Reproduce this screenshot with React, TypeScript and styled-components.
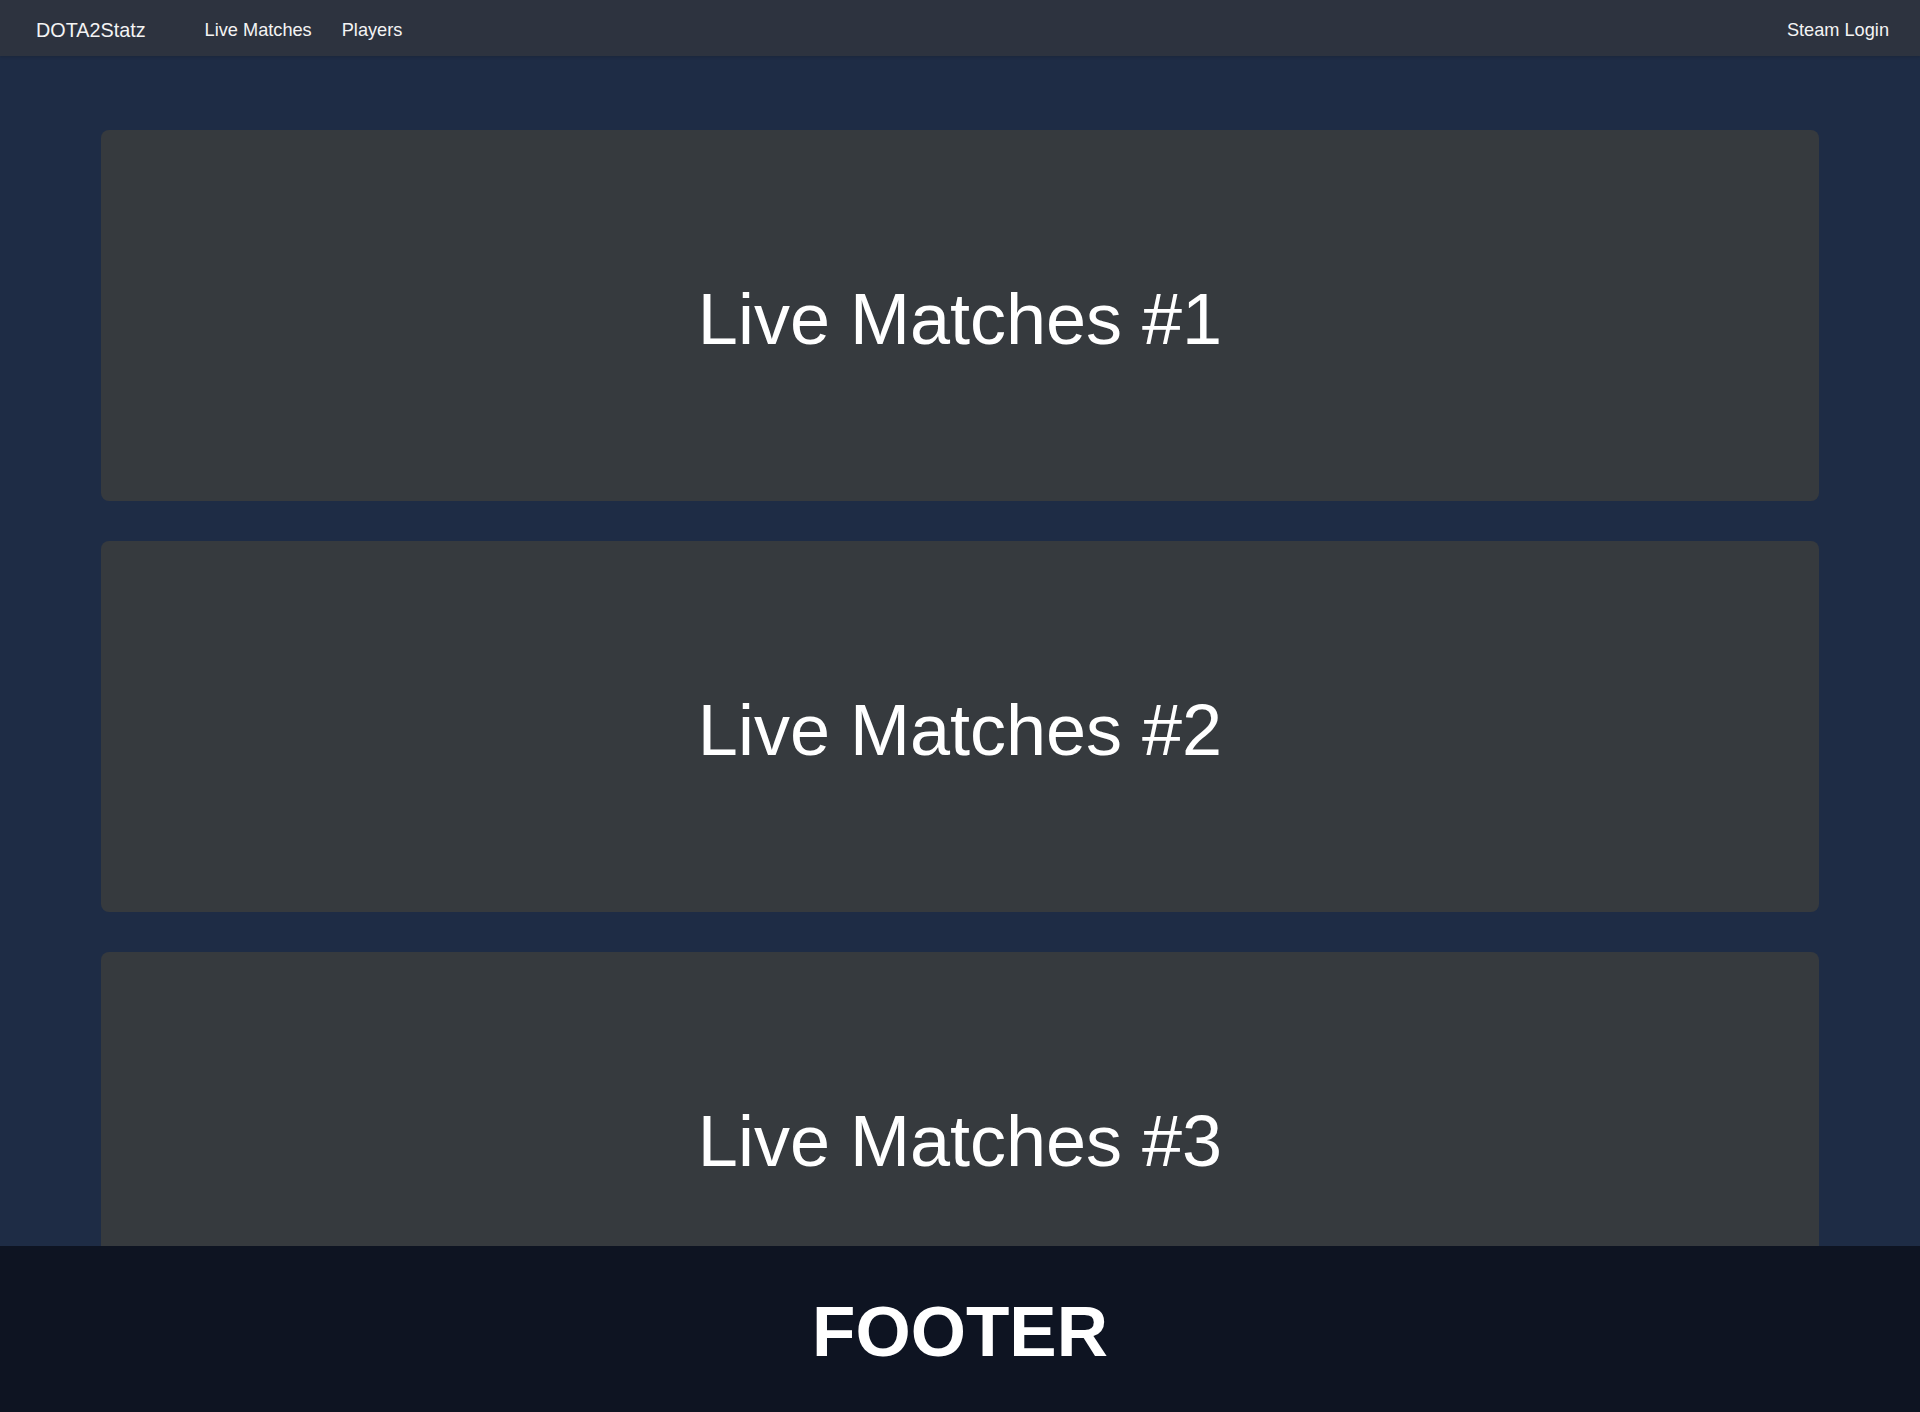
import React from "react";
import styled, { createGlobalStyle } from "styled-components";

const GlobalStyle = createGlobalStyle`
  html, body {
    margin: 0;
    padding: 0;
    background: #1e2c45;
    font-family: "Liberation Sans", Arial, Helvetica, sans-serif;
    color: #fff;
  }
  * {
    box-sizing: border-box;
  }
`;

const matches = [1, 2, 3];

const App: React.FC = () => {
  return (
    <>
      <GlobalStyle />
      <Page>
        <NavBar>
          <Brand href="#">DOTA2Statz</Brand>
          <NavLinks>
            <NavLink href="#">Live Matches</NavLink>
            <NavLink href="#">Players</NavLink>
          </NavLinks>
          <LoginLink href="#">Steam Login</LoginLink>
        </NavBar>
        <Main>
          {matches.map((n) => (
            <MatchCard key={n}>
              <CardTitle>Live Matches #{n}</CardTitle>
            </MatchCard>
          ))}
        </Main>
        <Footer>
          <FooterTitle>FOOTER</FooterTitle>
        </Footer>
      </Page>
    </>
  );
};

const Page = styled.div`
  min-height: 100vh;
  background: #1e2c45;
`;

const NavBar = styled.nav`
  height: 56px;
  display: flex;
  align-items: center;
  padding: 5px 31px 0 36px;
  background: #2d333f;
  box-shadow: 0 1px 3px rgba(0, 0, 0, 0.15);
`;

const Brand = styled.a`
  font-size: 19.8px;
  color: #f4f4f4;
  text-decoration: none;
  margin-right: 59px;
`;

const NavLinks = styled.div`
  display: flex;
  align-items: center;
  gap: 30px;
  flex: 1;
`;

const NavLink = styled.a`
  font-size: 18.2px;
  color: #f4f4f4;
  text-decoration: none;
`;

const LoginLink = styled(NavLink)``;

const Main = styled.main`
  display: flex;
  flex-direction: column;
  gap: 40px;
  padding: 74px 101px 206px;
`;

const MatchCard = styled.section`
  height: 371px;
  display: flex;
  align-items: center;
  justify-content: center;
  padding-top: 6px;
  background: #363a3e;
  border-radius: 8px;
`;

const CardTitle = styled.h2`
  margin: 0;
  font-size: 72px;
  font-weight: 400;
  color: #fff;
`;

const Footer = styled.footer`
  position: fixed;
  left: 0;
  right: 0;
  bottom: 0;
  height: 166px;
  display: flex;
  align-items: center;
  justify-content: center;
  padding-top: 5px;
  background: #0e1422;
`;

const FooterTitle = styled.h1`
  margin: 0;
  font-size: 71px;
  font-weight: 700;
  color: #fff;
`;

export default App;
